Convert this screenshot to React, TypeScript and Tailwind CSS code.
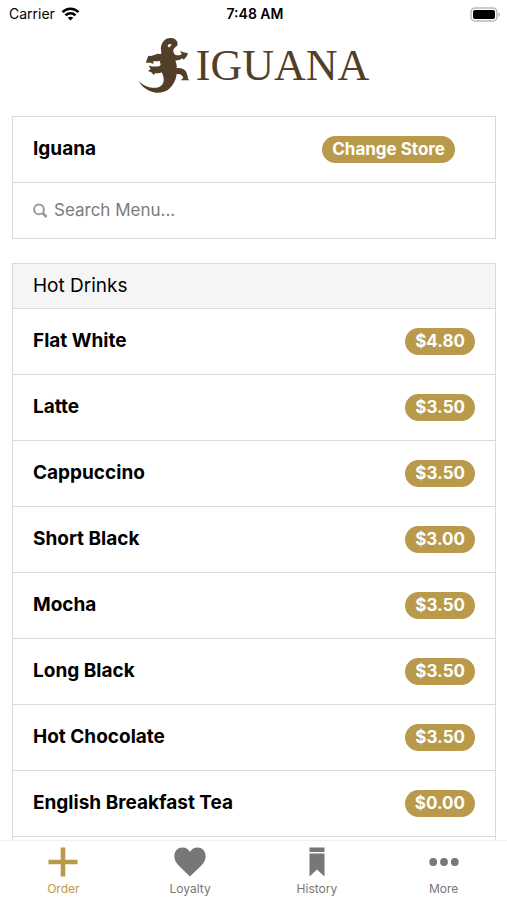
import { useState } from 'react';

type MenuItem = {
  name: string;
  price: string;
};

const hotDrinks: MenuItem[] = [
  { name: 'Flat White', price: '$4.80' },
  { name: 'Latte', price: '$3.50' },
  { name: 'Cappuccino', price: '$3.50' },
  { name: 'Short Black', price: '$3.00' },
  { name: 'Mocha', price: '$3.50' },
  { name: 'Long Black', price: '$3.50' },
  { name: 'Hot Chocolate', price: '$3.50' },
  { name: 'English Breakfast Tea', price: '$0.00' },
];

function StatusBar() {
  return (
    <div className="grid h-7 grid-cols-3 items-center pr-1.5 pl-[9px] text-sm text-black">
      <div className="flex items-center gap-1.5">
        <span>Carrier</span>
        <svg className="h-[14px] w-[19px]" viewBox="0 0 18 14" fill="none" stroke="currentColor" strokeWidth="2.6">
          <path d="M1 5.2C5.6 0.6 12.4 0.6 17 5.2" />
          <path d="M4 8.4C7 5.6 11 5.6 14 8.4" />
          <path d="M9 13.6L6.2 10.8C7.8 9.3 10.2 9.3 11.8 10.8Z" fill="currentColor" stroke="none" />
        </svg>
      </div>
      <span className="text-center font-semibold">7:48 AM</span>
      <svg className="h-[15px] w-[31px] justify-self-end" viewBox="0 0 31 15">
        <rect x="1" y="1" width="26" height="13" rx="4" fill="#fff" stroke="#b9b9b9" strokeWidth="1.5" />
        <rect x="3" y="3" width="22" height="9" rx="2" fill="#000" />
        <path d="M28.5 5.2C30.6 6 30.6 9 28.5 9.8Z" fill="#b9b9b9" />
      </svg>
    </div>
  );
}

function Logo() {
  return (
    <h1 className="flex items-center justify-center gap-px text-[#523f29]">
      <svg className="h-[66px] w-[57px]" viewBox="13 0 171 198" fill="currentColor" aria-hidden="true">
        <path d="M82 44C86 26 99 16 113 18C127 19 135 31 131 40C127 46 119 48 119 56C119 62 122 67 126 69C134 71 142 69 144 65L139 56L149 61L163 64C161 72 156 78 150 83L146 79C140 84 132 85 125 86C128 92 130 101 129 109C138 107 149 109 155 116C160 123 162 131 163 140L167 145L141 145L149 138C147 130 141 125 129 126C127 145 118 160 106 171C94 181 76 185 60 181C39 175 24 163 14 146C31 163 52 169 69 167C85 164 91 153 90 140C89 132 87 127 84 121C76 125 70 124 65 123L60 129L53 121L43 117L51 111L45 101C56 103 65 105 76 103C81 101 82 98 80 94C78 91 79 88 80 86C72 89 64 87 59 88L59 96L50 92L37 92L39 84L44 71C53 74 60 69 70 66C77 64 82 69 83 64C84 58 80 52 82 44Z" />
        <path d="M102 42C103 36 109 34 114 38C113 42 108 41 107 47Z" fill="#fff" />
      </svg>
      <span className="pt-0.5 font-['Liberation_Serif',serif] text-[44px] leading-[64px]">IGUANA</span>
    </h1>
  );
}

function PlusIcon() {
  return (
    <svg className="size-[30px]" viewBox="0 0 30 30" fill="currentColor" aria-hidden="true">
      <path d="M12.7 0.5H17.3V12.7H29.5V17.3H17.3V29.5H12.7V17.3H0.5V12.7H12.7Z" />
    </svg>
  );
}

function HeartIcon() {
  return (
    <svg className="h-[30px] w-8" viewBox="0 0 32 30" fill="currentColor" aria-hidden="true">
      <path d="M16 29.5C12 25 4 19 1.4 14C-1.4 8 1.4 0.5 8.4 0.5C12 0.5 14.8 2.5 16 5C17.2 2.5 20 0.5 23.6 0.5C30.6 0.5 33.4 8 30.6 14C28 19 20 25 16 29.5Z" />
    </svg>
  );
}

function RibbonIcon() {
  return (
    <svg className="h-[30px] w-4" viewBox="0 0 16 30" fill="currentColor" aria-hidden="true">
      <path d="M0.5 0.5H15.5V5H0.5ZM0.5 6.5H15.5V29.5L8 22.5L0.5 29.5Z" />
    </svg>
  );
}

function DotsIcon() {
  return (
    <svg className="size-[30px]" viewBox="0 0 30 30" fill="currentColor" aria-hidden="true">
      <circle cx="4.2" cy="15" r="3.9" />
      <circle cx="15" cy="15" r="3.9" />
      <circle cx="25.8" cy="15" r="3.9" />
    </svg>
  );
}

const tabs = [
  { label: 'Order', Icon: PlusIcon },
  { label: 'Loyalty', Icon: HeartIcon },
  { label: 'History', Icon: RibbonIcon },
  { label: 'More', Icon: DotsIcon },
];

export default function App() {
  const [query, setQuery] = useState('');
  const [activeTab, setActiveTab] = useState('Order');

  const items = hotDrinks.filter((item) => item.name.toLowerCase().includes(query.toLowerCase()));

  return (
    <div className="flex h-screen flex-col bg-white font-[Inter,sans-serif] text-black">
      <header className="pb-[18px]">
        <StatusBar />
        <div className="pt-1">
          <Logo />
        </div>
      </header>

      <main className="flex min-h-0 flex-1 flex-col gap-6 overflow-hidden pr-[11px] pl-3">
        <section className="shrink-0 border border-[#dadada]">
          <div className="flex h-[66px] items-center justify-between border-b border-[#dadada] pr-10 pl-5">
            <h2 className="text-[19px] font-bold">Iguana</h2>
            <button type="button" className="h-[27px] rounded-full bg-[#b99a4b] px-2.5 text-[17px] font-bold text-white">
              Change Store
            </button>
          </div>
          <label className="flex h-[55px] items-center gap-1.5 pl-5">
            <svg className="size-[15px] text-[#999]" viewBox="0 0 15 15" fill="none" stroke="currentColor" aria-hidden="true">
              <circle cx="6" cy="6.4" r="4.9" strokeWidth="2" />
              <path d="M9.6 10L13.6 14" strokeWidth="2.6" />
            </svg>
            <input
              type="text"
              aria-label="Search Menu"
              className="min-w-0 flex-1 text-[17px] outline-none placeholder:text-[#7c7c7c]"
              placeholder="Search Menu..."
              value={query}
              onChange={(event) => setQuery(event.target.value)}
            />
          </label>
        </section>

        <section className="flex-1 border border-b-0 border-[#dadada]">
          <h2 className="flex h-[45px] items-center border-b border-[#dadada] bg-[#f5f5f5] px-5 text-[19px]">Hot Drinks</h2>
          <ul>
            {items.map((item) => (
              <li key={item.name} className="flex h-[66px] items-center justify-between border-b border-[#dadada] px-5">
                <span className="text-[19px] font-bold">{item.name}</span>
                <span className="flex h-[27px] items-center rounded-full bg-[#b99a4b] px-2.5 text-[17px] font-bold text-white">
                  {item.price}
                </span>
              </li>
            ))}
          </ul>
        </section>
      </main>

      <nav className="grid h-[60px] shrink-0 grid-cols-4 border-t border-[#f0f0f0] bg-white">
        {tabs.map(({ label, Icon }) => (
          <button
            key={label}
            type="button"
            onClick={() => setActiveTab(label)}
            className={`flex flex-col items-center gap-1 pt-1.5 text-xs ${activeTab === label ? 'text-[#b99a4b]' : 'text-[#777]'}`}
          >
            <Icon />
            <span>{label}</span>
          </button>
        ))}
      </nav>
    </div>
  );
}
